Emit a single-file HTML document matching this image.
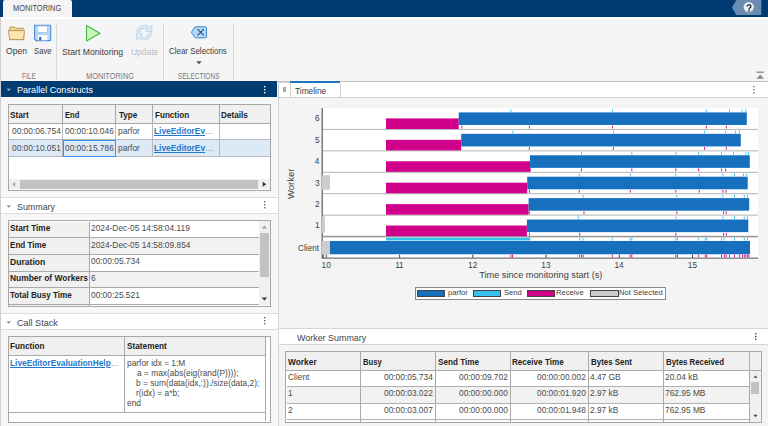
<!DOCTYPE html>
<html><head><meta charset="utf-8">
<style>
html,body{margin:0;padding:0;}
body{width:768px;height:426px;overflow:hidden;position:relative;background:#f5f5f5;font-family:"Liberation Sans", sans-serif;}
.r{position:absolute;box-sizing:content-box;}
.t{position:absolute;white-space:nowrap;line-height:1;font-family:"Liberation Sans", sans-serif;}
</style></head><body>
<div class="r" style="left:0px;top:0px;width:768px;height:17px;background:#003b71;"></div>
<div class="r" style="left:3px;top:0;width:69px;height:18px;background:#f5f5f5;border-radius:2px 2px 0 0"></div>
<div class="t" style="left:13.40px;top:4.02px;font-size:8.6px;color:#454545;font-weight:normal;transform:scaleX(0.8670);transform-origin:0 0;">MONITORING</div>
<svg style="position:absolute;left:728px;top:0" width="40" height="17" viewBox="728 0 40 17">
<polygon points="736.3,0 761.3,0 761.3,15 736.3,15 731.9,7.5" fill="#6a8cb3"/>
<defs><radialGradient id="hg" cx="0.45" cy="0.3" r="0.75"><stop offset="0" stop-color="#ffffff"/><stop offset="0.6" stop-color="#eef1f4"/><stop offset="1" stop-color="#aebccb"/></radialGradient></defs>
<circle cx="748.8" cy="7.3" r="5.3" fill="url(#hg)" stroke="#8a9bb0" stroke-width="0.5"/>
<path d="M747,6.6 q0.2,-1.9 1.9,-1.9 q1.9,0 1.9,1.7 q0,1 -1,1.5 q-0.8,0.5 -0.8,1.5 v0.4" fill="none" stroke="#1d3148" stroke-width="1.4"/>
<rect x="748.3" y="10.4" width="1.4" height="1.4" fill="#1d3148"/>
</svg>
<div class="r" style="left:0px;top:17px;width:768px;height:2px;background:#ffffff;"></div>
<div class="r" style="left:0px;top:17px;width:1px;height:409px;background:#cfcfcf;"></div>
<div class="r" style="left:0px;top:80.8px;width:768px;height:1.2px;background:#c4c4c4;"></div>
<div class="r" style="left:56px;top:22.5px;width:1px;height:57.5px;background:#d9d9d9;"></div>
<div class="r" style="left:163px;top:22.5px;width:1px;height:57.5px;background:#d9d9d9;"></div>
<div class="r" style="left:233px;top:22.5px;width:1px;height:57.5px;background:#d9d9d9;"></div>
<svg style="position:absolute;left:0;top:18px" width="240" height="30" viewBox="0 18 240 30">
<path d="M9.6,39.6 V28 q0,-1 1,-1 h3.8 l1.3,1.3 h7.2 q0.9,0 0.9,0.9 V39.6z" fill="#efd594" stroke="#b88f55" stroke-width="0.9"/>
<path d="M8.4,30.6 h15.4 q0.7,0 0.6,0.8 l-0.9,8.2 h-13.7z" fill="#fbe6ad" stroke="#b88f55" stroke-width="0.9" stroke-linejoin="round"/>
<path d="M34.6,25.2 h15.6 q0.5,0 0.5,0.5 v14.4 q0,0.5 -0.5,0.5 h-14.2 l-1.4,-1.4z" fill="#b9d8f4" stroke="#4c8ed3" stroke-width="1.1"/>
<rect x="37.3" y="26" width="10" height="6.4" fill="#ffffff" stroke="#7fb0e0" stroke-width="0.5"/>
<rect x="37.9" y="35.2" width="9.4" height="5.1" fill="#ffffff"/>
<rect x="39.2" y="37" width="2" height="3.3" fill="#1f5fa8"/>
<polygon points="86.5,25.5 100,33.2 86.5,41" fill="#c8f5bb" stroke="#45b845" stroke-width="1.1" stroke-linejoin="round"/>
<g fill="none" stroke-linecap="butt">
<path d="M138.2,33 a6,6 0 0 1 10.3,-4.3" stroke="#b7d3ee" stroke-width="3.4"/>
<path d="M150.2,32.6 a6,6 0 0 1 -10.3,4.3" stroke="#b7d3ee" stroke-width="3.4"/>
<path d="M138.2,33 a6,6 0 0 1 10.3,-4.3" stroke="#e4eef8" stroke-width="1.6"/>
<path d="M150.2,32.6 a6,6 0 0 1 -10.3,4.3" stroke="#e4eef8" stroke-width="1.6"/>
</g>
<polygon points="151.8,25.2 151.8,31.6 145.6,31.2" fill="#e4eef8" stroke="#b7d3ee" stroke-width="0.9" stroke-linejoin="round"/>
<polygon points="136.6,40.2 136.6,33.8 142.8,34.2" fill="#e4eef8" stroke="#b7d3ee" stroke-width="0.9" stroke-linejoin="round"/>
<path d="M195.2,26.8 h10.4 a1,1 0 0 1 1,1 v9 a1,1 0 0 1 -1,1 h-10.4 l-3.8,-5.5z" fill="#b3d8f6" stroke="#3f86cc" stroke-width="1"/>
<path d="M197.6,29.2 l6.2,6.2 M203.8,29.2 l-6.2,6.2" stroke="#1d4e8c" stroke-width="1.1"/>
</svg>
<div class="t" style="left:5.61px;top:47.18px;font-size:9px;color:#3c3c3c;font-weight:normal;transform:scaleX(0.9517);transform-origin:0 0;">Open</div>
<div class="t" style="left:33.85px;top:47.18px;font-size:9px;color:#3c3c3c;font-weight:normal;transform:scaleX(0.8574);transform-origin:0 0;">Save</div>
<div class="t" style="left:62.41px;top:47.55px;font-size:8.8px;color:#3c3c3c;font-weight:normal;transform:scaleX(0.9843);transform-origin:0 0;">Start Monitoring</div>
<div class="t" style="left:130.97px;top:47.55px;font-size:8.8px;color:#b9b9b9;font-weight:normal;transform:scaleX(0.9589);transform-origin:0 0;">Update</div>
<div class="t" style="left:169.40px;top:47.45px;font-size:8.8px;color:#3c3c3c;font-weight:normal;transform:scaleX(0.9018);transform-origin:0 0;">Clear Selections</div>
<svg style="position:absolute;left:195px;top:60px" width="8" height="5"><polygon points="1.3,1.2 6.7,1.2 4,4.3" fill="#4a4a4a"/></svg>
<div class="t" style="left:21.67px;top:72.47px;font-size:8.3px;color:#7a7a7a;font-weight:normal;transform:scaleX(0.7931);transform-origin:0 0;">FILE</div>
<div class="t" style="left:86.41px;top:72.47px;font-size:8.3px;color:#7a7a7a;font-weight:normal;transform:scaleX(0.8927);transform-origin:0 0;">MONITORING</div>
<div class="t" style="left:177.70px;top:72.47px;font-size:8.3px;color:#7a7a7a;font-weight:normal;transform:scaleX(0.7910);transform-origin:0 0;">SELECTIONS</div>
<svg style="position:absolute;left:755px;top:70px" width="10" height="10"><rect x="1.6" y="1.6" width="7.2" height="1.2" fill="#7d7d7d"/><polygon points="1.4,8.8 5.2,4.6 9,8.8" fill="#8a8a8a"/></svg>
<div class="r" style="left:1px;top:82px;width:277px;height:344px;background:#f7f7f7;"></div>
<div class="r" style="left:1px;top:81.3px;width:276px;height:15.4px;background:#003b71;"></div>
<svg style="position:absolute;left:5px;top:86px" width="8" height="7"><polygon points="1.6,2.7 6,2.7 3.8,5" fill="#a9b9ca"/></svg>
<div class="t" style="left:16.77px;top:84.77px;font-size:9.6px;color:#ffffff;font-weight:normal;transform:scaleX(0.9454);transform-origin:0 0;">Parallel Constructs</div>
<svg style="position:absolute;left:263px;top:85px" width="4" height="10"><rect x="1" y="1" width="1.4" height="1.4" fill="#fff"/><rect x="1" y="4" width="1.4" height="1.4" fill="#fff"/><rect x="1" y="7" width="1.4" height="1.4" fill="#fff"/></svg>
<div class="r" style="left:278px;top:82px;width:1px;height:344px;background:#d6d6d6;"></div>
<div class="r" style="left:8px;top:104px;width:261px;height:85px;border:1px solid #a7a7a7;background:#fff"></div>
<div class="r" style="left:9px;top:104.7px;width:261px;height:18.6px;background:#f0f0f0;"></div>
<div class="r" style="left:9px;top:123.3px;width:261px;height:1px;background:#a7a7a7;"></div>
<div class="r" style="left:9px;top:139.1px;width:261px;height:1px;background:#b8b8b8;"></div>
<div class="r" style="left:9px;top:140.1px;width:261px;height:16px;background:#dceaf8;"></div>
<div class="r" style="left:9px;top:156px;width:261px;height:1px;background:#b8b8b8;"></div>
<div class="r" style="left:62px;top:104.7px;width:1px;height:18.6px;background:#a7a7a7;"></div>
<div class="r" style="left:62px;top:123.3px;width:1px;height:33.7px;background:#b8b8b8;"></div>
<div class="r" style="left:115px;top:104.7px;width:1px;height:18.6px;background:#a7a7a7;"></div>
<div class="r" style="left:115px;top:123.3px;width:1px;height:33.7px;background:#b8b8b8;"></div>
<div class="r" style="left:152px;top:104.7px;width:1px;height:18.6px;background:#a7a7a7;"></div>
<div class="r" style="left:152px;top:123.3px;width:1px;height:33.7px;background:#b8b8b8;"></div>
<div class="r" style="left:219px;top:104.7px;width:1px;height:18.6px;background:#a7a7a7;"></div>
<div class="r" style="left:219px;top:123.3px;width:1px;height:33.7px;background:#b8b8b8;"></div>
<div class="r" style="left:63.4px;top:139.6px;width:50.8px;height:15.6px;border:1px solid #3990e8"></div>
<div class="t" style="left:10.05px;top:111.04px;font-size:8.7px;color:#222;font-weight:bold;transform:scaleX(0.9514);transform-origin:0 0;">Start</div>
<div class="t" style="left:64.81px;top:111.04px;font-size:8.7px;color:#222;font-weight:bold;transform:scaleX(0.8751);transform-origin:0 0;">End</div>
<div class="t" style="left:118.52px;top:111.04px;font-size:8.7px;color:#222;font-weight:bold;transform:scaleX(0.9341);transform-origin:0 0;">Type</div>
<div class="t" style="left:154.77px;top:111.04px;font-size:8.7px;color:#222;font-weight:bold;transform:scaleX(0.9319);transform-origin:0 0;">Function</div>
<div class="t" style="left:221.17px;top:111.04px;font-size:8.7px;color:#222;font-weight:bold;transform:scaleX(0.9413);transform-origin:0 0;">Details</div>
<div class="t" style="left:11.73px;top:126.85px;font-size:8.8px;color:#4a4a4a;font-weight:normal;transform:scaleX(0.9500);transform-origin:0 0;">00:00:06.754</div>
<div class="t" style="left:64.81px;top:126.85px;font-size:8.8px;color:#4a4a4a;font-weight:normal;transform:scaleX(0.9500);transform-origin:0 0;">00:00:10.046</div>
<div class="t" style="left:117.86px;top:126.85px;font-size:8.8px;color:#4a4a4a;font-weight:normal;transform:scaleX(0.9500);transform-origin:0 0;">parfor</div>
<div class="t" style="left:154.46px;top:126.94px;font-size:8.7px;color:#2577cc;font-weight:bold;transform:scaleX(0.9613);transform-origin:0 0;"><span style="text-decoration:underline;color:#2577cc;font-weight:bold">LiveEditorEv</span><span style="color:#888;font-weight:normal">&hellip;</span></div>
<div class="t" style="left:11.85px;top:143.85px;font-size:8.8px;color:#4a4a4a;font-weight:normal;transform:scaleX(0.9500);transform-origin:0 0;">00:00:10.051</div>
<div class="t" style="left:64.81px;top:143.85px;font-size:8.8px;color:#4a4a4a;font-weight:normal;transform:scaleX(0.9500);transform-origin:0 0;">00:00:15.786</div>
<div class="t" style="left:117.86px;top:143.85px;font-size:8.8px;color:#4a4a4a;font-weight:normal;transform:scaleX(0.9500);transform-origin:0 0;">parfor</div>
<div class="t" style="left:154.46px;top:143.94px;font-size:8.7px;color:#2577cc;font-weight:bold;transform:scaleX(0.9613);transform-origin:0 0;"><span style="text-decoration:underline;color:#2577cc;font-weight:bold">LiveEditorEv</span><span style="color:#888;font-weight:normal">&hellip;</span></div>
<div class="r" style="left:9px;top:179.4px;width:261px;height:10.1px;background:#f0f0f0;"></div>
<div class="r" style="left:20px;top:180.2px;width:238px;height:8.8px;background:#c2c2c2;"></div>
<svg style="position:absolute;left:9px;top:179px" width="262" height="11"><polygon points="3.2,5.3 6.2,2.8 6.2,7.8" fill="#a8a8a8"/><polygon points="257.2,5.3 253.7,2.8 253.7,7.8" fill="#333"/></svg>
<div class="r" style="left:1px;top:197px;width:277px;height:1px;background:#dcdcdc;"></div>
<div class="r" style="left:1px;top:198px;width:277px;height:15.4px;background:#ffffff;"></div>
<div class="r" style="left:1px;top:213.4px;width:277px;height:1px;background:#dcdcdc;"></div>
<svg style="position:absolute;left:5px;top:203px" width="8" height="7"><polygon points="1.5,2.2 6.1,2.2 3.8,5" fill="#9a9a9a"/></svg>
<div class="t" style="left:17.00px;top:201.84px;font-size:9.4px;color:#454545;font-weight:normal;transform:scaleX(0.9470);transform-origin:0 0;">Summary</div>
<svg style="position:absolute;left:263px;top:200px" width="4" height="10"><rect x="1" y="1" width="1.4" height="1.4" fill="#666"/><rect x="1" y="4" width="1.4" height="1.4" fill="#666"/><rect x="1" y="7" width="1.4" height="1.4" fill="#666"/></svg>
<div class="r" style="left:8px;top:220px;width:261px;height:85.4px;border:1px solid #a7a7a7;background:#fff;overflow:hidden"></div>
<div class="r" style="left:9px;top:221.6px;width:80.2px;height:84px;background:#f0f0f0;"></div>
<div class="r" style="left:9px;top:237.3px;width:250.7px;height:1px;background:#a9a9a9;"></div>
<div class="t" style="left:10.15px;top:224.14px;font-size:8.7px;color:#222;font-weight:bold;transform:scaleX(0.9521);transform-origin:0 0;">Start Time</div>
<div class="t" style="left:91.28px;top:224.05px;font-size:8.8px;color:#4a4a4a;font-weight:normal;transform:scaleX(0.9500);transform-origin:0 0;">2024-Dec-05 14:58:04.119</div>
<div class="r" style="left:90.2px;top:238.3px;width:169.5px;height:15.699999999999989px;background:#f2f2f2;"></div>
<div class="r" style="left:9px;top:254.0px;width:250.7px;height:1px;background:#a9a9a9;"></div>
<div class="t" style="left:9.87px;top:240.84px;font-size:8.7px;color:#222;font-weight:bold;transform:scaleX(0.9316);transform-origin:0 0;">End Time</div>
<div class="t" style="left:91.28px;top:240.75px;font-size:8.8px;color:#4a4a4a;font-weight:normal;transform:scaleX(0.9500);transform-origin:0 0;">2024-Dec-05 14:58:09.854</div>
<div class="r" style="left:9px;top:270.7px;width:250.7px;height:1px;background:#a9a9a9;"></div>
<div class="t" style="left:9.84px;top:257.54px;font-size:8.7px;color:#222;font-weight:bold;transform:scaleX(0.9865);transform-origin:0 0;">Duration</div>
<div class="t" style="left:91.37px;top:257.45px;font-size:8.8px;color:#4a4a4a;font-weight:normal;transform:scaleX(0.9500);transform-origin:0 0;">00:00:05.734</div>
<div class="r" style="left:90.2px;top:271.7px;width:169.5px;height:15.699999999999989px;background:#f2f2f2;"></div>
<div class="r" style="left:9px;top:287.4px;width:250.7px;height:1px;background:#a9a9a9;"></div>
<div class="t" style="left:9.85px;top:274.24px;font-size:8.7px;color:#222;font-weight:bold;transform:scaleX(0.9693);transform-origin:0 0;">Number of Workers</div>
<div class="t" style="left:91.28px;top:274.15px;font-size:8.8px;color:#4a4a4a;font-weight:normal;transform:scaleX(0.9500);transform-origin:0 0;">6</div>
<div class="r" style="left:9px;top:304.2px;width:250.7px;height:1px;background:#a9a9a9;"></div>
<div class="t" style="left:10.32px;top:291.04px;font-size:8.7px;color:#222;font-weight:bold;transform:scaleX(0.9305);transform-origin:0 0;">Total Busy Time</div>
<div class="t" style="left:91.37px;top:290.95px;font-size:8.8px;color:#4a4a4a;font-weight:normal;transform:scaleX(0.9500);transform-origin:0 0;">00:00:25.521</div>
<div class="r" style="left:89.2px;top:221.6px;width:1px;height:84px;background:#a9a9a9;"></div>
<div class="r" style="left:9px;top:305.2px;width:250.7px;height:0px;background:#a9a9a9;"></div>
<div class="r" style="left:259px;top:221px;width:11px;height:84.4px;background:#f0f0f0;"></div>
<div class="r" style="left:260px;top:232.9px;width:8.8px;height:44.2px;background:#c2c2c2;"></div>
<svg style="position:absolute;left:259px;top:221px" width="12" height="85"><polygon points="5.4,4.6 2.8,7.5 8,7.5" fill="#a0a0a0"/><polygon points="5.4,79.6 2.6,76.5 8.2,76.5" fill="#333"/></svg>
<div class="r" style="left:1px;top:313.4px;width:277px;height:1px;background:#dcdcdc;"></div>
<div class="r" style="left:1px;top:314.4px;width:277px;height:14.3px;background:#ffffff;"></div>
<div class="r" style="left:1px;top:328.7px;width:277px;height:1px;background:#dcdcdc;"></div>
<svg style="position:absolute;left:5px;top:319px" width="8" height="7"><polygon points="1.5,2.2 6.1,2.2 3.8,5" fill="#9a9a9a"/></svg>
<div class="t" style="left:16.75px;top:317.86px;font-size:9.5px;color:#454545;font-weight:normal;transform:scaleX(0.9533);transform-origin:0 0;">Call Stack</div>
<svg style="position:absolute;left:263px;top:316px" width="4" height="10"><rect x="1" y="1" width="1.4" height="1.4" fill="#666"/><rect x="1" y="4" width="1.4" height="1.4" fill="#666"/><rect x="1" y="7" width="1.4" height="1.4" fill="#666"/></svg>
<div class="r" style="left:8px;top:336px;width:261px;height:84.5px;border:1px solid #a7a7a7;background:#fdfdfd"></div>
<div class="r" style="left:9px;top:337px;width:256px;height:18px;background:#f0f0f0;"></div>
<div class="r" style="left:9px;top:355px;width:256px;height:57.5px;background:#ffffff;"></div>
<div class="r" style="left:9px;top:355px;width:256px;height:1px;background:#a9a9a9;"></div>
<div class="r" style="left:9px;top:412px;width:256px;height:1px;background:#a9a9a9;"></div>
<div class="r" style="left:124px;top:337px;width:1px;height:75.5px;background:#a9a9a9;"></div>
<div class="r" style="left:265px;top:337px;width:1px;height:84px;background:#a9a9a9;"></div>
<div class="t" style="left:10.07px;top:342.04px;font-size:8.7px;color:#222;font-weight:bold;transform:scaleX(0.9375);transform-origin:0 0;">Function</div>
<div class="t" style="left:127.15px;top:342.04px;font-size:8.7px;color:#222;font-weight:bold;transform:scaleX(0.9479);transform-origin:0 0;">Statement</div>
<div class="t" style="left:10.06px;top:359.14px;font-size:8.7px;color:#2577cc;font-weight:bold;transform:scaleX(0.9570);transform-origin:0 0;"><span style="text-decoration:underline;font-weight:bold">LiveEditorEvaluationHelp</span><span style="color:#888;font-weight:normal">&hellip;</span></div>
<div class="t" style="left:126.86px;top:358.85px;font-size:8.8px;color:#4a4a4a;font-weight:normal;transform:scaleX(0.9500);transform-origin:0 0;">parfor idx = 1:M</div>
<div class="t" style="left:136.57px;top:369.00px;font-size:8.8px;color:#4a4a4a;font-weight:normal;transform:scaleX(0.9500);transform-origin:0 0;">a = max(abs(eig(rand(P))));</div>
<div class="t" style="left:136.36px;top:379.15px;font-size:8.8px;color:#4a4a4a;font-weight:normal;transform:scaleX(0.9500);transform-origin:0 0;">b = sum(data(idx,:))./size(data,2);</div>
<div class="t" style="left:136.36px;top:389.30px;font-size:8.8px;color:#4a4a4a;font-weight:normal;transform:scaleX(0.9500);transform-origin:0 0;">r(idx) = a*b;</div>
<div class="t" style="left:127.07px;top:399.45px;font-size:8.8px;color:#4a4a4a;font-weight:normal;transform:scaleX(0.9500);transform-origin:0 0;">end</div>
<div class="r" style="left:279px;top:82px;width:489px;height:344px;background:#f4f4f4;"></div>
<div class="r" style="left:279px;top:81.6px;width:489px;height:15.7px;background:#ffffff;"></div>
<div class="r" style="left:279px;top:97.3px;width:489px;height:1px;background:#d0d0d0;"></div>
<div class="r" style="left:278px;top:81.6px;width:10.6px;height:14.7px;border:1px solid #cfcfcf;background:#fff"></div>
<div class="r" style="left:283px;top:87px;width:2.5px;height:4.5px;background:#a8a8a8;"></div>
<div class="r" style="left:289.6px;top:81.3px;width:50px;height:1.6px;background:#1f73c2;"></div>
<div class="r" style="left:339.6px;top:82.5px;width:1px;height:15px;background:#d0d0d0;"></div>
<div class="t" style="left:295.13px;top:86.50px;font-size:9.1px;color:#3a3a3a;font-weight:normal;transform:scaleX(0.9180);transform-origin:0 0;">Timeline</div>
<svg style="position:absolute;left:752px;top:85px" width="4" height="10"><rect x="1.2" y="1" width="1.3" height="1.3" fill="#666"/><rect x="1.2" y="4" width="1.3" height="1.3" fill="#666"/><rect x="1.2" y="7" width="1.3" height="1.3" fill="#666"/></svg>
<svg style="position:absolute;left:280px;top:98px" width="488" height="230" viewBox="280 98 488 230">
<rect x="322" y="108" width="436" height="150" fill="#ffffff"/>
<rect x="322" y="128.93" width="436" height="1" fill="#b4b4b4"/>
<rect x="322" y="150.36" width="436" height="1" fill="#b4b4b4"/>
<rect x="322" y="171.79" width="436" height="1" fill="#b4b4b4"/>
<rect x="322" y="193.21" width="436" height="1" fill="#b4b4b4"/>
<rect x="322" y="214.64" width="436" height="1" fill="#b4b4b4"/>
<rect x="322" y="235.77" width="436" height="1.6" fill="#9a9a9a"/>
<rect x="386" y="118.40" width="72.70" height="10.6" fill="#d1008a"/>
<rect x="458.7" y="112.40" width="288.10" height="12.6" fill="#1670be"/>
<rect x="386" y="139.83" width="75.20" height="10.6" fill="#d1008a"/>
<rect x="461.2" y="133.83" width="279.60" height="12.6" fill="#1670be"/>
<rect x="386" y="161.26" width="144.00" height="10.6" fill="#d1008a"/>
<rect x="530" y="155.26" width="219.80" height="12.6" fill="#1670be"/>
<rect x="386" y="182.69" width="141.20" height="10.6" fill="#d1008a"/>
<rect x="527.2" y="176.69" width="220.50" height="12.6" fill="#1670be"/>
<rect x="386" y="204.11" width="142.60" height="10.6" fill="#d1008a"/>
<rect x="528.6" y="198.11" width="220.60" height="12.6" fill="#1670be"/>
<rect x="386" y="225.54" width="140.90" height="10.6" fill="#d1008a"/>
<rect x="526.9" y="219.54" width="221.40" height="12.6" fill="#1670be"/>
<rect x="321.5" y="108" width="1.5" height="150.5" fill="#7a7a7a"/>
<rect x="322" y="175.29" width="8" height="14.5" fill="#cccccc"/>
<rect x="322" y="216.54" width="3" height="16.2" fill="#cccccc"/>
<rect x="322" y="240.97" width="8" height="13.6" fill="#cccccc"/>
<rect x="330" y="240.97" width="420" height="13.3" fill="#1670be"/>
<rect x="386" y="237.67" width="144.3" height="2.8" fill="#36c0ee"/>
<rect x="510.4" y="109.20" width="0.9" height="2.8" fill="#36c0ee"/>
<rect x="611.9" y="109.20" width="0.9" height="2.8" fill="#36c0ee"/>
<rect x="705.8" y="109.20" width="0.9" height="2.8" fill="#36c0ee"/>
<rect x="729.1" y="109.20" width="0.9" height="2.8" fill="#36c0ee"/>
<rect x="741.5" y="109.20" width="0.9" height="2.8" fill="#36c0ee"/>
<rect x="745.4" y="109.20" width="0.9" height="2.8" fill="#36c0ee"/>
<rect x="461.4" y="125.63" width="0.9" height="2.8" fill="#d1008a"/>
<rect x="528.9" y="125.63" width="0.9" height="2.8" fill="#d1008a"/>
<rect x="611.9" y="125.63" width="0.9" height="2.8" fill="#d1008a"/>
<rect x="705.8" y="125.63" width="0.9" height="2.8" fill="#d1008a"/>
<rect x="725.8" y="125.63" width="0.9" height="2.8" fill="#d1008a"/>
<rect x="512.4" y="130.63" width="0.9" height="2.8" fill="#36c0ee"/>
<rect x="612.9" y="130.63" width="0.9" height="2.8" fill="#36c0ee"/>
<rect x="704.0" y="130.63" width="0.9" height="2.8" fill="#36c0ee"/>
<rect x="725.2" y="130.63" width="0.9" height="2.8" fill="#36c0ee"/>
<rect x="734.9" y="130.63" width="0.9" height="2.8" fill="#36c0ee"/>
<rect x="738.9" y="130.63" width="0.9" height="2.8" fill="#36c0ee"/>
<rect x="528.9" y="147.06" width="0.9" height="2.8" fill="#d1008a"/>
<rect x="612.9" y="147.06" width="0.9" height="2.8" fill="#d1008a"/>
<rect x="704.0" y="147.06" width="0.9" height="2.8" fill="#d1008a"/>
<rect x="725.8" y="147.06" width="0.9" height="2.8" fill="#d1008a"/>
<rect x="581.0" y="152.06" width="0.9" height="2.8" fill="#36c0ee"/>
<rect x="631.4" y="152.06" width="0.9" height="2.8" fill="#36c0ee"/>
<rect x="675.4" y="152.06" width="0.9" height="2.8" fill="#36c0ee"/>
<rect x="698.2" y="152.06" width="0.9" height="2.8" fill="#36c0ee"/>
<rect x="721.0" y="152.06" width="0.9" height="2.8" fill="#36c0ee"/>
<rect x="733.0" y="152.06" width="0.9" height="2.8" fill="#36c0ee"/>
<rect x="745.4" y="152.06" width="0.9" height="2.8" fill="#36c0ee"/>
<rect x="748.0" y="152.06" width="0.9" height="2.8" fill="#36c0ee"/>
<rect x="529.9" y="168.49" width="0.9" height="2.8" fill="#d1008a"/>
<rect x="581.0" y="168.49" width="0.9" height="2.8" fill="#d1008a"/>
<rect x="631.4" y="168.49" width="0.9" height="2.8" fill="#d1008a"/>
<rect x="675.4" y="168.49" width="0.9" height="2.8" fill="#d1008a"/>
<rect x="698.2" y="168.49" width="0.9" height="2.8" fill="#d1008a"/>
<rect x="721.0" y="168.49" width="0.9" height="2.8" fill="#d1008a"/>
<rect x="725.2" y="168.49" width="0.9" height="2.8" fill="#d1008a"/>
<rect x="578.8" y="173.49" width="0.9" height="2.8" fill="#36c0ee"/>
<rect x="629.8" y="173.49" width="0.9" height="2.8" fill="#36c0ee"/>
<rect x="675.4" y="173.49" width="0.9" height="2.8" fill="#36c0ee"/>
<rect x="698.8" y="173.49" width="0.9" height="2.8" fill="#36c0ee"/>
<rect x="722.5" y="173.49" width="0.9" height="2.8" fill="#36c0ee"/>
<rect x="734.0" y="173.49" width="0.9" height="2.8" fill="#36c0ee"/>
<rect x="743.1" y="173.49" width="0.9" height="2.8" fill="#36c0ee"/>
<rect x="746.3" y="173.49" width="0.9" height="2.8" fill="#36c0ee"/>
<rect x="528.9" y="189.91" width="0.9" height="2.8" fill="#d1008a"/>
<rect x="578.8" y="189.91" width="0.9" height="2.8" fill="#d1008a"/>
<rect x="629.8" y="189.91" width="0.9" height="2.8" fill="#d1008a"/>
<rect x="675.4" y="189.91" width="0.9" height="2.8" fill="#d1008a"/>
<rect x="698.8" y="189.91" width="0.9" height="2.8" fill="#d1008a"/>
<rect x="722.5" y="189.91" width="0.9" height="2.8" fill="#d1008a"/>
<rect x="725.5" y="189.91" width="0.9" height="2.8" fill="#d1008a"/>
<rect x="582.6" y="194.91" width="0.9" height="2.8" fill="#36c0ee"/>
<rect x="676.4" y="194.91" width="0.9" height="2.8" fill="#36c0ee"/>
<rect x="722.5" y="194.91" width="0.9" height="2.8" fill="#36c0ee"/>
<rect x="734.0" y="194.91" width="0.9" height="2.8" fill="#36c0ee"/>
<rect x="743.8" y="194.91" width="0.9" height="2.8" fill="#36c0ee"/>
<rect x="747.0" y="194.91" width="0.9" height="2.8" fill="#36c0ee"/>
<rect x="528.9" y="211.34" width="0.9" height="2.8" fill="#d1008a"/>
<rect x="583.5" y="211.34" width="0.9" height="2.8" fill="#d1008a"/>
<rect x="676.4" y="211.34" width="0.9" height="2.8" fill="#d1008a"/>
<rect x="723.2" y="211.34" width="0.9" height="2.8" fill="#d1008a"/>
<rect x="725.8" y="211.34" width="0.9" height="2.8" fill="#d1008a"/>
<rect x="577.8" y="216.34" width="0.9" height="2.8" fill="#36c0ee"/>
<rect x="675.4" y="216.34" width="0.9" height="2.8" fill="#36c0ee"/>
<rect x="722.5" y="216.34" width="0.9" height="2.8" fill="#36c0ee"/>
<rect x="734.0" y="216.34" width="0.9" height="2.8" fill="#36c0ee"/>
<rect x="743.8" y="216.34" width="0.9" height="2.8" fill="#36c0ee"/>
<rect x="747.0" y="216.34" width="0.9" height="2.8" fill="#36c0ee"/>
<rect x="528.9" y="232.77" width="0.9" height="2.8" fill="#d1008a"/>
<rect x="579.3" y="232.77" width="0.9" height="2.8" fill="#d1008a"/>
<rect x="675.4" y="232.77" width="0.9" height="2.8" fill="#d1008a"/>
<rect x="723.2" y="232.77" width="0.9" height="2.8" fill="#d1008a"/>
<rect x="725.8" y="232.77" width="0.9" height="2.8" fill="#d1008a"/>
<rect x="579.3" y="237.77" width="0.9" height="2.8" fill="#36c0ee"/>
<rect x="582.6" y="237.77" width="0.9" height="2.8" fill="#36c0ee"/>
<rect x="611.9" y="237.77" width="0.9" height="2.8" fill="#36c0ee"/>
<rect x="629.8" y="237.77" width="0.9" height="2.8" fill="#36c0ee"/>
<rect x="631.4" y="237.77" width="0.9" height="2.8" fill="#36c0ee"/>
<rect x="675.4" y="237.77" width="0.9" height="2.8" fill="#36c0ee"/>
<rect x="677.0" y="237.77" width="0.9" height="2.8" fill="#36c0ee"/>
<rect x="698.2" y="237.77" width="0.9" height="2.8" fill="#36c0ee"/>
<rect x="704.8" y="237.77" width="0.9" height="2.8" fill="#36c0ee"/>
<rect x="706.3" y="237.77" width="0.9" height="2.8" fill="#36c0ee"/>
<rect x="721.0" y="237.77" width="0.9" height="2.8" fill="#36c0ee"/>
<rect x="723.5" y="237.77" width="0.9" height="2.8" fill="#36c0ee"/>
<rect x="734.0" y="237.77" width="0.9" height="2.8" fill="#36c0ee"/>
<rect x="743.8" y="237.77" width="0.9" height="2.8" fill="#36c0ee"/>
<rect x="747.0" y="237.77" width="0.9" height="2.8" fill="#36c0ee"/>
<rect x="510.4" y="254.60" width="0.9" height="2.8" fill="#d1008a"/>
<rect x="512.0" y="254.60" width="0.9" height="2.8" fill="#d1008a"/>
<rect x="578.8" y="254.60" width="0.9" height="2.8" fill="#d1008a"/>
<rect x="581.0" y="254.60" width="0.9" height="2.8" fill="#d1008a"/>
<rect x="582.6" y="254.60" width="0.9" height="2.8" fill="#d1008a"/>
<rect x="611.9" y="254.60" width="0.9" height="2.8" fill="#d1008a"/>
<rect x="629.8" y="254.60" width="0.9" height="2.8" fill="#d1008a"/>
<rect x="631.4" y="254.60" width="0.9" height="2.8" fill="#d1008a"/>
<rect x="675.4" y="254.60" width="0.9" height="2.8" fill="#d1008a"/>
<rect x="677.0" y="254.60" width="0.9" height="2.8" fill="#d1008a"/>
<rect x="698.2" y="254.60" width="0.9" height="2.8" fill="#d1008a"/>
<rect x="704.8" y="254.60" width="0.9" height="2.8" fill="#d1008a"/>
<rect x="706.3" y="254.60" width="0.9" height="2.8" fill="#d1008a"/>
<rect x="721.0" y="254.60" width="0.9" height="2.8" fill="#d1008a"/>
<rect x="724.2" y="254.60" width="0.9" height="2.8" fill="#d1008a"/>
<rect x="725.8" y="254.60" width="0.9" height="2.8" fill="#d1008a"/>
<rect x="729.1" y="254.60" width="0.9" height="2.8" fill="#d1008a"/>
<rect x="734.0" y="254.60" width="0.9" height="2.8" fill="#d1008a"/>
<rect x="738.9" y="254.60" width="0.9" height="2.8" fill="#d1008a"/>
<rect x="742.1" y="254.60" width="0.9" height="2.8" fill="#d1008a"/>
<rect x="743.8" y="254.60" width="0.9" height="2.8" fill="#d1008a"/>
<rect x="745.4" y="254.60" width="0.9" height="2.8" fill="#d1008a"/>
<rect x="747.0" y="254.60" width="0.9" height="2.8" fill="#d1008a"/>
<rect x="748.5" y="254.60" width="0.9" height="2.8" fill="#d1008a"/>
<rect x="322" y="257.6" width="436" height="1" fill="#555555"/>
<rect x="325.8" y="254.6" width="1" height="3.2" fill="#444444"/>
<rect x="399.1" y="254.6" width="1" height="3.2" fill="#444444"/>
<rect x="472.3" y="254.6" width="1" height="3.2" fill="#444444"/>
<rect x="545.5" y="254.6" width="1" height="3.2" fill="#444444"/>
<rect x="618.8" y="254.6" width="1" height="3.2" fill="#444444"/>
<rect x="692.0" y="254.6" width="1" height="3.2" fill="#444444"/>
<rect x="322.8" y="254.6" width="1" height="3.2" fill="#444444"/>
</svg>
<div class="t" style="left:314.93px;top:114.29px;font-size:8.3px;color:#404040;font-weight:normal;">6</div>
<div class="t" style="left:314.93px;top:135.72px;font-size:8.3px;color:#404040;font-weight:normal;">5</div>
<div class="t" style="left:314.84px;top:157.15px;font-size:8.3px;color:#404040;font-weight:normal;">4</div>
<div class="t" style="left:314.93px;top:178.57px;font-size:8.3px;color:#404040;font-weight:normal;">3</div>
<div class="t" style="left:315.01px;top:200.00px;font-size:8.3px;color:#404040;font-weight:normal;">2</div>
<div class="t" style="left:314.97px;top:221.43px;font-size:8.3px;color:#404040;font-weight:normal;">1</div>
<div class="t" style="left:297.79px;top:244.01px;font-size:8.6px;color:#404040;font-weight:normal;transform:scaleX(0.9628);transform-origin:0 0;">Client</div>
<div class="t" style="left:286.2px;top:198.75px;font-size:9.5px;color:#404040;transform:rotate(-90deg);transform-origin:0 0;line-height:1">Worker</div>
<div class="t" style="left:321.53px;top:260.87px;font-size:8.3px;color:#404040;font-weight:normal;">10</div>
<div class="t" style="left:395.13px;top:260.87px;font-size:8.3px;color:#404040;font-weight:normal;">11</div>
<div class="t" style="left:468.09px;top:260.87px;font-size:8.3px;color:#404040;font-weight:normal;">12</div>
<div class="t" style="left:541.30px;top:260.87px;font-size:8.3px;color:#404040;font-weight:normal;">13</div>
<div class="t" style="left:614.51px;top:260.87px;font-size:8.3px;color:#404040;font-weight:normal;">14</div>
<div class="t" style="left:687.80px;top:260.87px;font-size:8.3px;color:#404040;font-weight:normal;">15</div>
<div class="t" style="left:479.22px;top:270.81px;font-size:9.2px;color:#404040;font-weight:normal;">Time since monitoring start (s)</div>
<div class="r" style="left:415.1px;top:287.1px;width:248.6px;height:11.4px;border:1px solid #8a8a8a;background:#fff"></div>
<div class="r" style="left:417.1px;top:290.2px;width:26.4px;height:4.6px;border:1px solid #444;background:#1670be"></div>
<div class="t" style="left:447.51px;top:289.31px;font-size:7.9px;color:#404040;font-weight:normal;transform:scaleX(0.9606);transform-origin:0 0;">parfor</div>
<div class="r" style="left:473px;top:290.2px;width:26.4px;height:4.6px;border:1px solid #444;background:#36c0ee"></div>
<div class="t" style="left:503.66px;top:289.31px;font-size:7.9px;color:#404040;font-weight:normal;transform:scaleX(0.9671);transform-origin:0 0;">Send</div>
<div class="r" style="left:527px;top:290.2px;width:26.4px;height:4.6px;border:1px solid #444;background:#d1008a"></div>
<div class="t" style="left:556.39px;top:289.31px;font-size:7.9px;color:#404040;font-weight:normal;transform:scaleX(0.9698);transform-origin:0 0;">Receive</div>
<div class="r" style="left:590.3px;top:290.2px;width:26.4px;height:4.6px;border:1px solid #444;background:#cccccc"></div>
<div class="t" style="left:619.39px;top:289.31px;font-size:7.9px;color:#404040;font-weight:normal;transform:scaleX(0.9686);transform-origin:0 0;">Not Selected</div>
<div class="r" style="left:279px;top:328.3px;width:489px;height:1px;background:#d6d6d6;"></div>
<div class="r" style="left:279px;top:329.3px;width:489px;height:14.7px;background:#ffffff;"></div>
<div class="r" style="left:279px;top:344px;width:489px;height:1px;background:#d6d6d6;"></div>
<div class="t" style="left:296.66px;top:333.34px;font-size:9.4px;color:#454545;font-weight:normal;transform:scaleX(0.9520);transform-origin:0 0;">Worker Summary</div>
<svg style="position:absolute;left:754.3px;top:332.2px" width="4" height="10"><rect x="1" y="1" width="1.5" height="1.5" fill="#666"/><rect x="1" y="3.8" width="1.5" height="1.5" fill="#555"/><rect x="1" y="6.6" width="1.5" height="1.5" fill="#555"/></svg>
<div class="r" style="left:285px;top:351px;width:475px;height:70px;border:1px solid #a7a7a7;background:#fff"></div>
<div class="r" style="left:286px;top:352px;width:475px;height:18px;background:#f0f0f0;"></div>
<div class="r" style="left:286px;top:370px;width:475px;height:1px;background:#a9a9a9;"></div>
<div class="r" style="left:286.6px;top:386.25px;width:462.8px;height:1px;background:#b0b0b0;"></div>
<div class="r" style="left:286.6px;top:387.25px;width:462.8px;height:15.6px;background:#f2f2f2;"></div>
<div class="r" style="left:286.6px;top:402.9px;width:462.8px;height:1px;background:#b0b0b0;"></div>
<div class="r" style="left:286.6px;top:419px;width:462.8px;height:1px;background:#b0b0b0;"></div>
<div class="r" style="left:360.2px;top:352px;width:1px;height:70px;background:#a9a9a9;"></div>
<div class="r" style="left:435.3px;top:352px;width:1px;height:70px;background:#a9a9a9;"></div>
<div class="r" style="left:509.7px;top:352px;width:1px;height:70px;background:#a9a9a9;"></div>
<div class="r" style="left:588.4px;top:352px;width:1px;height:70px;background:#a9a9a9;"></div>
<div class="r" style="left:663.2px;top:352px;width:1px;height:70px;background:#a9a9a9;"></div>
<div class="r" style="left:749.4px;top:352px;width:1px;height:70px;background:#a9a9a9;"></div>
<div class="t" style="left:288.30px;top:357.84px;font-size:8.7px;color:#222;font-weight:bold;transform:scaleX(0.9626);transform-origin:0 0;">Worker</div>
<div class="t" style="left:362.80px;top:357.84px;font-size:8.7px;color:#222;font-weight:bold;transform:scaleX(0.8808);transform-origin:0 0;">Busy</div>
<div class="t" style="left:437.96px;top:357.84px;font-size:8.7px;color:#222;font-weight:bold;transform:scaleX(0.9357);transform-origin:0 0;">Send Time</div>
<div class="t" style="left:512.47px;top:357.84px;font-size:8.7px;color:#222;font-weight:bold;transform:scaleX(0.9324);transform-origin:0 0;">Receive Time</div>
<div class="t" style="left:590.98px;top:357.84px;font-size:8.7px;color:#222;font-weight:bold;transform:scaleX(0.9123);transform-origin:0 0;">Bytes Sent</div>
<div class="t" style="left:665.69px;top:357.84px;font-size:8.7px;color:#222;font-weight:bold;transform:scaleX(0.9024);transform-origin:0 0;">Bytes Received</div>
<div class="t" style="left:287.88px;top:372.95px;font-size:8.8px;color:#4a4a4a;font-weight:normal;transform:scaleX(0.9500);transform-origin:0 0;">Client</div>
<div class="t" style="left:384.23px;top:372.95px;font-size:8.8px;color:#4a4a4a;font-weight:normal;transform:scaleX(0.9500);transform-origin:0 0;">00:00:05.734</div>
<div class="t" style="left:458.80px;top:372.95px;font-size:8.8px;color:#4a4a4a;font-weight:normal;transform:scaleX(0.9500);transform-origin:0 0;">00:00:09.702</div>
<div class="t" style="left:537.20px;top:372.95px;font-size:8.8px;color:#4a4a4a;font-weight:normal;transform:scaleX(0.9500);transform-origin:0 0;">00:00:00.002</div>
<div class="t" style="left:590.33px;top:372.95px;font-size:8.8px;color:#4a4a4a;font-weight:normal;transform:scaleX(0.9500);transform-origin:0 0;">4.47 GB</div>
<div class="t" style="left:665.08px;top:372.95px;font-size:8.8px;color:#4a4a4a;font-weight:normal;transform:scaleX(0.9500);transform-origin:0 0;">20.04 kB</div>
<div class="t" style="left:287.67px;top:389.35px;font-size:8.8px;color:#4a4a4a;font-weight:normal;transform:scaleX(0.9500);transform-origin:0 0;">1</div>
<div class="t" style="left:384.40px;top:389.35px;font-size:8.8px;color:#4a4a4a;font-weight:normal;transform:scaleX(0.9500);transform-origin:0 0;">00:00:03.022</div>
<div class="t" style="left:458.67px;top:389.35px;font-size:8.8px;color:#4a4a4a;font-weight:normal;transform:scaleX(0.9500);transform-origin:0 0;">00:00:00.000</div>
<div class="t" style="left:537.07px;top:389.35px;font-size:8.8px;color:#4a4a4a;font-weight:normal;transform:scaleX(0.9500);transform-origin:0 0;">00:00:01.920</div>
<div class="t" style="left:590.08px;top:389.35px;font-size:8.8px;color:#4a4a4a;font-weight:normal;transform:scaleX(0.9500);transform-origin:0 0;">2.97 kB</div>
<div class="t" style="left:665.08px;top:389.35px;font-size:8.8px;color:#4a4a4a;font-weight:normal;transform:scaleX(0.9500);transform-origin:0 0;">762.95 MB</div>
<div class="t" style="left:287.88px;top:405.75px;font-size:8.8px;color:#4a4a4a;font-weight:normal;transform:scaleX(0.9500);transform-origin:0 0;">2</div>
<div class="t" style="left:384.40px;top:405.75px;font-size:8.8px;color:#4a4a4a;font-weight:normal;transform:scaleX(0.9500);transform-origin:0 0;">00:00:03.007</div>
<div class="t" style="left:458.67px;top:405.75px;font-size:8.8px;color:#4a4a4a;font-weight:normal;transform:scaleX(0.9500);transform-origin:0 0;">00:00:00.000</div>
<div class="t" style="left:537.11px;top:405.75px;font-size:8.8px;color:#4a4a4a;font-weight:normal;transform:scaleX(0.9500);transform-origin:0 0;">00:00:01.948</div>
<div class="t" style="left:590.08px;top:405.75px;font-size:8.8px;color:#4a4a4a;font-weight:normal;transform:scaleX(0.9500);transform-origin:0 0;">2.97 kB</div>
<div class="t" style="left:665.08px;top:405.75px;font-size:8.8px;color:#4a4a4a;font-weight:normal;transform:scaleX(0.9500);transform-origin:0 0;">762.95 MB</div>
<div class="r" style="left:750px;top:371px;width:11px;height:51px;background:#f0f0f0;"></div>
<div class="r" style="left:750.5px;top:382.4px;width:8.4px;height:11.7px;background:#c2c2c2;"></div>
<svg style="position:absolute;left:750px;top:371px" width="12" height="50"><polygon points="5.5,4.4 3.4,6.8 7.6,6.8" fill="#444"/><polygon points="5.5,46.2 3.4,43.8 7.6,43.8" fill="#444"/></svg>
</body></html>
